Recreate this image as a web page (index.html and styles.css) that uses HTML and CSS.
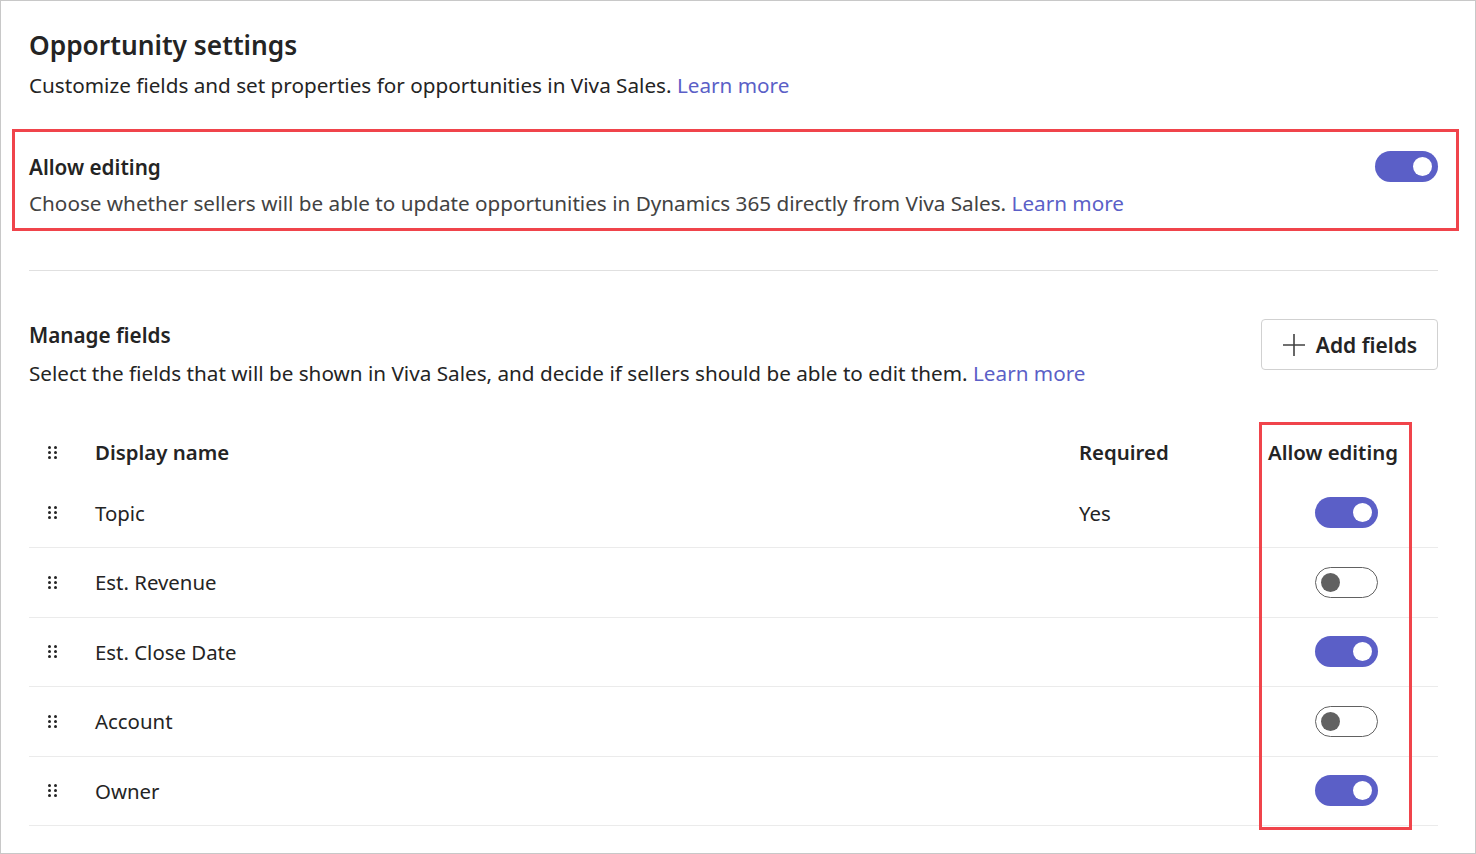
FILE: index.html
```html
<!DOCTYPE html>
<html lang="en">
<head>
<meta charset="utf-8">
<title>Opportunity settings</title>
<link rel="stylesheet" href="styles.css">
</head>
<body>
<div class="page">
  <header class="intro">
    <h1 class="title">Opportunity settings</h1>
    <p class="desc">Customize fields and set properties for opportunities in Viva Sales. <a class="link" href="#">Learn more</a></p>
  </header>

  <section class="highlight setting">
    <div class="setting-text">
      <h2 class="section-title">Allow editing</h2>
      <p class="desc muted">Choose whether sellers will be able to update opportunities in Dynamics 365 directly from Viva Sales. <a class="link" href="#">Learn more</a></p>
    </div>
    <span class="toggle on"><span class="knob"></span></span>
  </section>

  <hr class="divider">

  <section class="manage">
    <div class="manage-head">
      <div>
        <h2 class="section-title">Manage fields</h2>
        <p class="desc">Select the fields that will be shown in Viva Sales, and decide if sellers should be able to edit them. <a class="link" href="#">Learn more</a></p>
      </div>
      <button class="btn"><svg class="plus" width="24" height="24" viewBox="0 0 24 24"><path d="M12 1v22M1 12h22" stroke="#424242" stroke-width="1.6" fill="none"/></svg><span>Add fields</span></button>
    </div>

    <div class="table">
      <div class="row head">
        <span class="grip"><i></i><i></i><i></i><i></i><i></i><i></i></span>
        <span class="c-name">Display name</span>
        <span class="c-req">Required</span>
        <span class="c-edit">Allow editing</span>
      </div>
      <div class="row">
        <span class="grip"><i></i><i></i><i></i><i></i><i></i><i></i></span>
        <span class="c-name">Topic</span>
        <span class="c-req">Yes</span>
        <span class="c-edit"><span class="toggle on"><span class="knob"></span></span></span>
      </div>
      <div class="row">
        <span class="grip"><i></i><i></i><i></i><i></i><i></i><i></i></span>
        <span class="c-name">Est. Revenue</span>
        <span class="c-req"></span>
        <span class="c-edit"><span class="toggle off"><span class="knob"></span></span></span>
      </div>
      <div class="row">
        <span class="grip"><i></i><i></i><i></i><i></i><i></i><i></i></span>
        <span class="c-name">Est. Close Date</span>
        <span class="c-req"></span>
        <span class="c-edit"><span class="toggle on"><span class="knob"></span></span></span>
      </div>
      <div class="row">
        <span class="grip"><i></i><i></i><i></i><i></i><i></i><i></i></span>
        <span class="c-name">Account</span>
        <span class="c-req"></span>
        <span class="c-edit"><span class="toggle off"><span class="knob"></span></span></span>
      </div>
      <div class="row">
        <span class="grip"><i></i><i></i><i></i><i></i><i></i><i></i></span>
        <span class="c-name">Owner</span>
        <span class="c-req"></span>
        <span class="c-edit"><span class="toggle on"><span class="knob"></span></span></span>
      </div>
      <div class="col-mark"></div>
    </div>
  </section>
</div>
</body>
</html>
```

FILE: styles.css
```css
* { box-sizing: border-box; }
html, body { margin: 0; padding: 0; background: #fff; }
body {
  font-family: "Noto Sans", "Open Sans", sans-serif;
  color: #242424;
}
.page {
  width: 1476px;
  height: 854px;
  border: 1px solid #c8c8c8;
  padding: 26px 37px 0 28px;
  overflow: hidden;
}
.title {
  margin: 0;
  font-size: 26.3px;
  font-weight: 600;
  line-height: 36px;
}
.desc {
  margin: 0;
  font-size: 20.7px;
  line-height: 28px;
}
.intro .desc { margin-top: 8px; }
.muted { color: #424242; }
.link { color: #5b5fc7; text-decoration: none; }
.section-title {
  margin: 0;
  font-size: 20.7px;
  font-weight: 600;
  line-height: 28px;
}
.highlight {
  border: 3px solid #f0444b;
}
.setting {
  margin: 30px -21px 0 -17px;
  padding: 21px 18px 11px 14px;
  display: flex;
  justify-content: space-between;
  align-items: flex-start;
}
.setting .desc { margin-top: 8px; }
.setting .toggle { margin-top: -2px; }
.divider {
  border: 0;
  border-top: 1px solid #e0e0e0;
  margin: 39px 0 0 0;
}
.manage { margin-top: 50px; }
.manage-head {
  display: flex;
  justify-content: space-between;
  align-items: flex-start;
}
.manage-head .desc { margin-top: 10px; }
.btn {
  margin-top: -2px;
  width: 177px;
  height: 51px;
  border: 1px solid #d1d1d1;
  border-radius: 4px;
  background: #fff;
  display: flex;
  align-items: center;
  justify-content: center;
  gap: 10px;
  font-family: inherit;
  font-size: 21px;
  font-weight: 600;
  color: #242424;
  padding: 0;
}
.plus { flex: none; }
.table {
  position: relative;
  margin-top: 38.5px;
}
.row {
  display: flex;
  align-items: center;
  height: 69.5px;
  border-bottom: 1px solid #ebebeb;
  font-size: 20.4px;
  color: #242424;
}
.row.head {
  height: 53px;
  border-bottom: 0;
  font-weight: 600;
}
.grip {
  width: 66px;
  display: grid;
  grid-template-columns: 3px 3px;
  grid-auto-rows: 3px;
  column-gap: 3px;
  row-gap: 2px;
  padding-left: 19px;
}
.grip i {
  display: block;
  width: 3px;
  height: 3px;
  border-radius: 50%;
  background: #242424;
}
.c-name { width: 984px; }
.c-req { width: 189px; }
.c-edit {
  width: 150px;
  display: flex;
  justify-content: flex-start;
}
.row .c-edit .toggle { margin-left: 47px; }
.toggle {
  display: flex;
  align-items: center;
  width: 63px;
  height: 31px;
  border-radius: 16px;
  padding: 0 6px;
  flex: none;
}
.toggle.on {
  background: #5b5fc7;
  justify-content: flex-end;
}
.toggle.off {
  border: 1px solid #616161;
  background: #fff;
  justify-content: flex-start;
  padding: 0 5px;
}
.knob {
  width: 19px;
  height: 19px;
  border-radius: 50%;
}
.on .knob { background: #fff; }
.off .knob { background: #616161; }
.col-mark {
  position: absolute;
  left: 1230px;
  top: -4px;
  width: 153px;
  height: 408px;
  border: 3px solid #f0444b;
  pointer-events: none;
}
```
